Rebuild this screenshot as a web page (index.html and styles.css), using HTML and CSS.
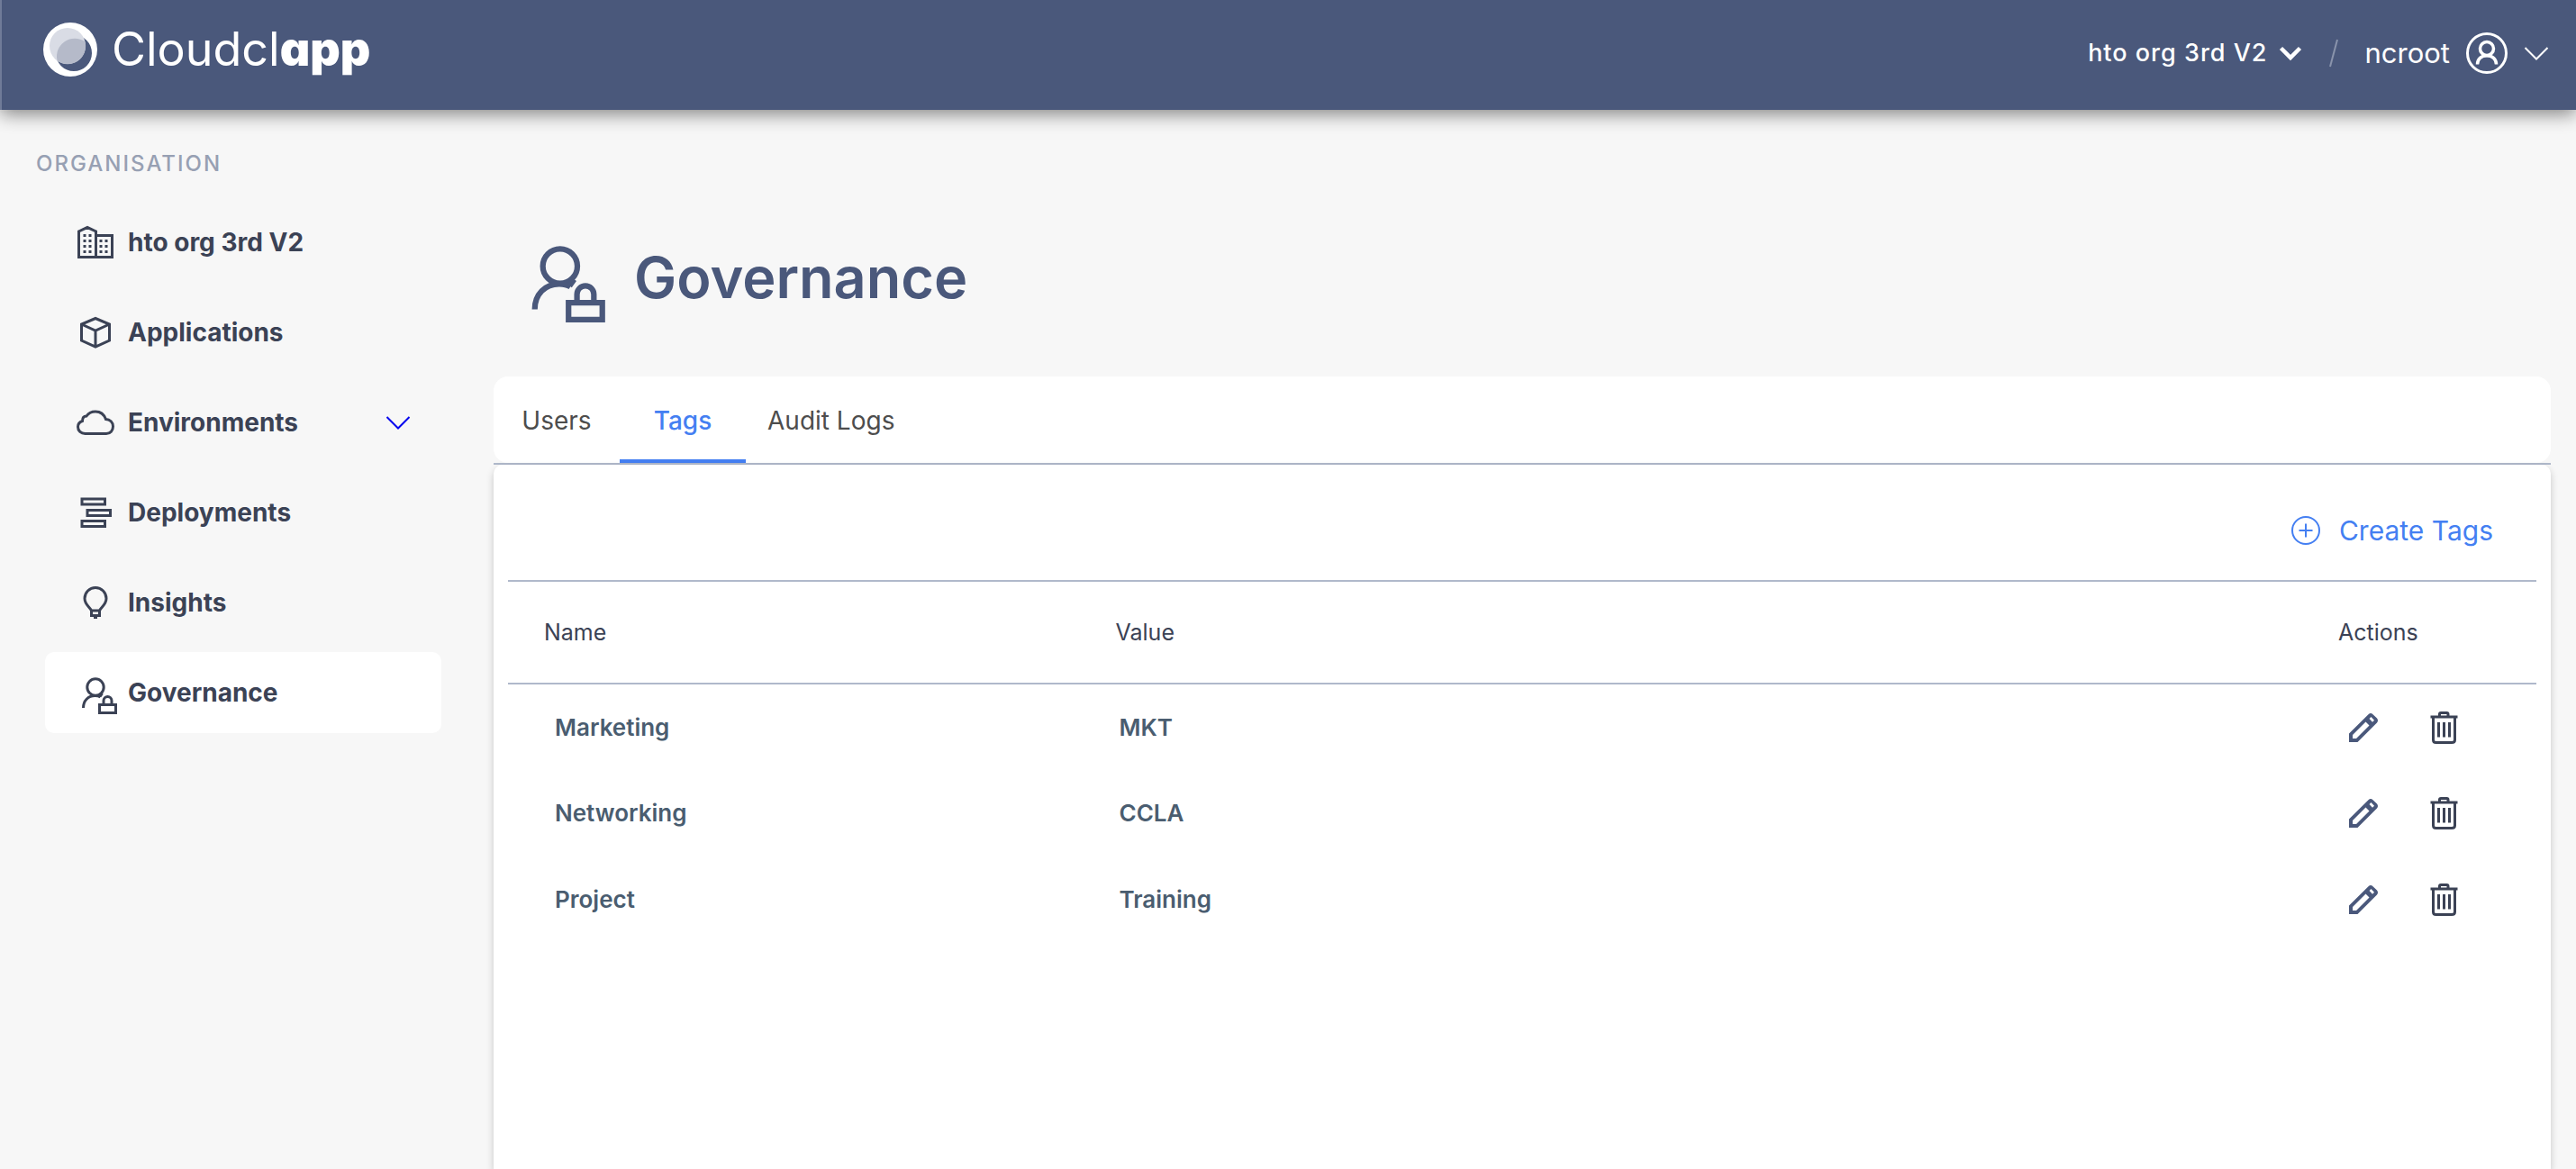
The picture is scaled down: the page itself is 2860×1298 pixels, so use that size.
FILE: index.html
```html
<!DOCTYPE html>
<html lang="en">
<head>
<meta charset="utf-8">
<title>Cloudclapp - Governance</title>
<meta name="viewport" content="width=device-width, initial-scale=1">
<link rel="stylesheet" href="styles.css">
</head>
<body>
<svg class="sprite" aria-hidden="true">
  <symbol id="i-org" viewBox="0 -2 48 48">
    <path d="M3.5 38.5V10L13 5.5L22.500 10V38.500ZM22.500 14.500H40.500V38.500H22.500"/>
    <path class="solid" d="M8.500 13h3v3h-3zM14.500 13h3v3h-3zM8.500 19h3v3h-3zM14.500 19h3v3h-3zM8.500 25h3v3h-3zM14.500 25h3v3h-3zM8.500 31h3v3h-3zM14.500 31h3v3h-3zM26.500 19h3v3h-3zM32.500 19h3v3h-3zM26.500 25h3v3h-3zM32.500 25h3v3h-3zM26.500 31h3v3h-3zM32.500 31h3v3h-3z"/>
  </symbol>
  <symbol id="i-box" viewBox="0 -2 48 48">
    <path d="M22 6.500L37.500 13V31L22 38L6.500 31V13ZM6.500 13L22 20L37.500 13M22 20V38"/>
  </symbol>
  <symbol id="i-cloud" viewBox="0 -2 48 48">
    <path d="M10.500 34.500H34C38.500 34.500 41.500 31 41.500 26.500C41.500 22 38 18.500 33.500 18.500C31.500 13 27 10 22 10C17.500 10 14 12 12 15C9 15 7.500 17 7.500 20.500C4.500 21.500 2.500 24 2.500 27C2.500 31.500 6 34.500 10.500 34.500Z"/>
  </symbol>
  <symbol id="i-deploy" viewBox="0 -2 48 48">
    <path d="M7 7H32.500V13H7ZM13 19.500H38.500V25.500H13ZM7 31.500H32.500V37.500H7Z"/>
  </symbol>
  <symbol id="i-bulb" viewBox="0 -2 48 48">
    <path d="M17.500 31C16 27 10 24.500 10 17.500A12 12 0 0 1 34 17.500C34 24.500 28 27 26.500 31ZM17.500 31V36.500H26.500V31M20 38.500H24"/>
  </symbol>
  <symbol id="i-gov" viewBox="0 -2 48 48">
    <circle cx="22" cy="16" r="9.200"/>
    <path d="M8.500 39C8.500 31 14 25.500 21.500 25.500C24 25.500 26 26 27.500 27M29.500 23L27 26.500M26.500 35.500H44.500V44.500H26.500ZM31 35V31A4.500 4.500 0 0 1 40 31V35"/>
  </symbol>
  <symbol id="i-edit" viewBox="0 0 32 32">
    <path class="solid" fill-rule="evenodd" d="M0 22.500L21.500 1.200Q24 -1 26.500 1.200L31 5.500Q33 8 31 10.500L9.500 32H0ZM4 28H8L22.500 13.500L18.500 9.500L4 24ZM22.500 6L26 9.700L28 7.700L24.500 4Z"/>
  </symbol>
  <symbol id="i-trash" viewBox="0 0 32 36">
    <path d="M.5 6H30.500M3.500 6V31.500Q3.500 34.500 6.500 34.500H24Q27.500 34.500 27.500 31.500V6M10.500 6V3Q10.500 1.500 12 1.500H18.500Q20 1.500 20 3V6M9.500 12V28.500M15.500 12V28.500M21.500 12V28.500"/>
  </symbol>
</svg>

<header class="topbar">
  <a class="brand" href="#" aria-label="Cloudclapp">
    <svg class="brand-mark" viewBox="0 0 60 60" aria-hidden="true">
      <path fill="#fff" fill-rule="evenodd" d="M30 0A30 30 0 1 1 30 60A30 30 0 1 1 30 0ZM34 14A20 20 0 1 0 34 54A20 20 0 1 0 34 14Z"/>
      <circle cx="27" cy="26" r="20" fill="#d9dce5"/>
      <path fill="#b5bac9" d="M46.500 21.500A20 20 0 0 1 15.500 42.500A20 20 0 0 1 46.500 21.500Z"/>
    </svg>
    <span class="brand-name">Cloudcl<b>app</b></span>
  </a>
  <div class="account">
    <button class="org-switch" type="button">hto org 3rd V2
      <svg width="26" height="18" viewBox="0 0 26 18" aria-hidden="true"><path d="M2.500 3.500L13 14L23.500 3.500" stroke-width="4.500"/></svg>
    </button>
    <svg class="slash" width="10" height="32" viewBox="0 0 10 32" aria-hidden="true"><path d="M9 1L1 31" stroke-width="2"/></svg>
    <button class="user-menu" type="button">ncroot
      <svg class="avatar" width="46" height="46" viewBox="0 0 46 46" aria-hidden="true"><circle cx="23" cy="23" r="21.500" stroke-width="3"/><circle cx="23" cy="18" r="7.500" stroke-width="3.500"/><path d="M12.500 35.500C12.500 29.500 17 25.800 23 25.800S33.500 29.500 33.500 35.500" stroke-width="3.500"/></svg>
      <svg width="28" height="18" viewBox="0 0 28 18" aria-hidden="true"><path d="M1.500 3L14 15.500L26.500 3" stroke-width="2"/></svg>
    </button>
  </div>
</header>

<div class="layout">
  <aside class="sidebar">
    <h2 class="sidebar-title">ORGANISATION</h2>
    <nav class="nav">
      <a class="nav-item" href="#"><svg class="icon"><use href="#i-org"/></svg>hto org 3rd V2</a>
      <a class="nav-item" href="#"><svg class="icon"><use href="#i-box"/></svg>Applications</a>
      <a class="nav-item" href="#"><svg class="icon"><use href="#i-cloud"/></svg>Environments
        <svg class="expand" width="28" height="18" viewBox="0 0 28 18" aria-hidden="true"><path d="M1.500 3L14 15.500L26.500 3"/></svg></a>
      <a class="nav-item" href="#"><svg class="icon"><use href="#i-deploy"/></svg>Deployments</a>
      <a class="nav-item" href="#"><svg class="icon"><use href="#i-bulb"/></svg>Insights</a>
      <a class="nav-item active" href="#" aria-current="page"><svg class="icon"><use href="#i-gov"/></svg>Governance</a>
    </nav>
  </aside>

  <main class="content">
    <div class="page-head">
      <svg class="icon page-icon"><use href="#i-gov"/></svg>
      <h1 class="page-title">Governance</h1>
    </div>
    <div class="tabbar">
      <div class="tabs" role="tablist">
        <button class="tab" type="button" role="tab" aria-selected="false">Users</button>
        <button class="tab selected" type="button" role="tab" aria-selected="true">Tags</button>
        <button class="tab" type="button" role="tab" aria-selected="false">Audit Logs</button>
      </div>
    </div>
    <section class="panel">
      <div class="toolbar">
        <button class="create" type="button">
          <svg width="34" height="34" viewBox="0 0 34 34" aria-hidden="true"><circle cx="17" cy="17" r="15"/><path d="M17 9.500V24.500M9.500 17H24.500"/></svg>
          Create Tags
        </button>
      </div>
      <table class="tags">
        <thead>
          <tr><th class="col-name">Name</th><th class="col-value">Value</th><th class="col-actions">Actions</th></tr>
        </thead>
        <tbody>
          <tr><td>Marketing</td><td class="value">MKT</td><td><div class="actions"><button type="button" aria-label="Edit Marketing"><svg class="edit"><use href="#i-edit"/></svg></button><button type="button" aria-label="Delete Marketing"><svg class="trash"><use href="#i-trash"/></svg></button></div></td></tr>
          <tr><td>Networking</td><td class="value">CCLA</td><td><div class="actions"><button type="button" aria-label="Edit Networking"><svg class="edit"><use href="#i-edit"/></svg></button><button type="button" aria-label="Delete Networking"><svg class="trash"><use href="#i-trash"/></svg></button></div></td></tr>
          <tr><td>Project</td><td class="value">Training</td><td><div class="actions"><button type="button" aria-label="Edit Project"><svg class="edit"><use href="#i-edit"/></svg></button><button type="button" aria-label="Delete Project"><svg class="trash"><use href="#i-trash"/></svg></button></div></td></tr>
        </tbody>
      </table>
    </section>
  </main>
</div>
</body>
</html>
```
FILE: styles.css
```css
:root {
  --navy: #4a587b;
  --ink: #3b4255;
  --blue: #447ff2;
  --rule: #b0b9cb;
}

* {
  box-sizing: border-box;
}

body {
  display: flex;
  flex-direction: column;
  min-height: 100vh;
  margin: 0;
  background: #f7f7f7;
  color: var(--ink);
  font-family: Inter, "Liberation Sans", sans-serif;
  font-size: 28px;
  line-height: 36px;
}

button {
  padding: 0;
  border: 0;
  background: none;
  color: inherit;
  font: inherit;
  letter-spacing: inherit;
  cursor: pointer;
}

a {
  color: inherit;
  text-decoration: none;
}

svg {
  flex: none;
  fill: none;
  stroke: currentColor;
}

.sprite {
  position: absolute;
  width: 0;
  height: 0;
}

.solid {
  fill: currentColor;
  stroke: none;
}

/* Top bar */

.topbar {
  position: relative;
  z-index: 1;
  display: flex;
  align-items: center;
  justify-content: space-between;
  height: 122px;
  padding: 0 30px 0 46px;
  border-left: 2px solid #707b98;
  background: var(--navy);
  color: #fff;
  box-shadow: 0 4px 20px rgba(0, 0, 0, .5);
}

.brand {
  display: flex;
  align-items: center;
  gap: 16px;
  padding-bottom: 12px;
}

.brand-mark {
  width: 60px;
  height: 60px;
  stroke: none;
}

.brand-name {
  font-size: 52px;
  line-height: 60px;
  font-feature-settings: "cv11";
}

.brand-name b {
  font-weight: 900;
}

.account,
.org-switch,
.user-menu {
  display: flex;
  align-items: center;
}

.account {
  gap: 30px;
  padding-bottom: 4px;
}

.org-switch {
  gap: 12px;
  font-size: 27px;
  font-weight: 500;
  letter-spacing: 1px;
}

.slash {
  color: #8a94ac;
}

.user-menu {
  gap: 18px;
  font-size: 31px;
}

/* Sidebar */

.layout {
  display: flex;
  flex: 1;
}

.sidebar {
  flex: none;
  width: 548px;
  padding-top: 44px;
}

.sidebar-title {
  margin: 0 0 26px;
  padding-left: 40px;
  color: #97a0b3;
  font-size: 24px;
  font-weight: 500;
  line-height: 32px;
  letter-spacing: 2px;
}

.nav {
  display: flex;
  flex-direction: column;
  gap: 10px;
  width: 440px;
  margin-left: 50px;
}

.nav-item {
  display: flex;
  align-items: center;
  gap: 10px;
  height: 90px;
  padding: 0 34px;
  border-radius: 10px;
  font-weight: 700;
}

.nav-item.active {
  background: #fff;
}

.icon {
  width: 48px;
  height: 48px;
  stroke-width: 3px;
}

.expand {
  margin-left: auto;
  color: #00e;
  stroke-width: 2px;
}

/* Main column */

.content {
  display: flex;
  flex: 1;
  flex-direction: column;
  min-width: 0;
  padding-right: 28px;
}

.page-head {
  display: flex;
  align-items: center;
  gap: 28px;
  padding: 136px 28px 60px;
  color: var(--navy);
}

.page-icon {
  width: 100px;
  height: 100px;
}

.page-title {
  margin: 0;
  font-size: 63px;
  font-weight: 600;
  line-height: 80px;
}

.tabbar {
  border-bottom: 2px solid var(--rule);
}

.tabs {
  display: flex;
  height: 96px;
  border-radius: 16px;
  background: #fff;
  color: #4d4d4d;
}

.tab {
  min-width: 140px;
  padding: 6px 24px 0;
  border-bottom: 4px solid transparent;
}

.tab.selected {
  border-color: var(--blue);
  color: var(--blue);
  font-weight: 500;
}

.panel {
  flex: 1;
  padding: 0 16px;
  border-radius: 10px 10px 0 0;
  background: #fff;
  box-shadow: 0 4px 8px rgba(0, 0, 0, .2);
}

.toolbar {
  display: flex;
  justify-content: flex-end;
  padding: 51px 48px 33px;
}

.create {
  display: flex;
  align-items: center;
  gap: 20px;
  color: var(--blue);
  font-size: 30px;
  line-height: 44px;
  stroke-width: 2px;
}

.tags {
  width: 100%;
  border-collapse: collapse;
  table-layout: fixed;
  text-align: left;
  font-size: 26px;
}

.tags th {
  height: 114px;
  padding: 0 0 0 40px;
  border: solid var(--rule);
  border-width: 2px 0;
  font-size: 25px;
  font-weight: 400;
}

.col-name {
  width: 28%;
}

.tags .col-value {
  padding-left: 44px;
}

.col-actions {
  width: 260px;
}

.tags td {
  height: 96px;
  padding: 0 0 0 52px;
  color: #4a5d70;
  font-weight: 600;
}

.tags .value {
  padding-left: 48px;
}

.actions {
  display: flex;
  align-items: center;
  gap: 58px;
}

.actions button {
  display: flex;
}

.edit {
  width: 32px;
  height: 32px;
  color: var(--navy);
}

.trash {
  width: 32px;
  height: 36px;
  color: var(--ink);
  stroke-width: 3px;
}
```
